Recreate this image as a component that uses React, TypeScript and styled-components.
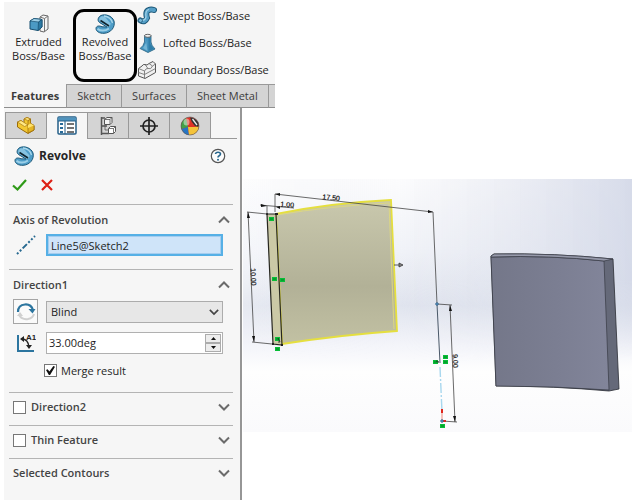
import React, { useState } from "react";
import styled, { createGlobalStyle } from "styled-components";

const GlobalStyle = createGlobalStyle`
  *, *::before, *::after { box-sizing: border-box; }
  body {
    margin: 0;
    background: #fff;
    color: #1e1e1e;
    font: 11px/16px "Open Sans", "Noto Sans", sans-serif;
  }
  button, input, select { font: inherit; color: inherit; margin: 0; }
  svg { display: block; flex: none; }
`;

const Page = styled.div`
  display: flex;
  flex-direction: column;
  align-items: stretch;
  min-height: 100vh;
  padding: 2px 0 0 4px;
`;

const CommandManager = styled.header`
  align-self: flex-start;
  width: 271px;
`;

const Ribbon = styled.div`
  display: flex;
  height: 82px;
  background: #f5f5f5;
`;

const BigCommand = styled.button<{ $marked?: boolean }>`
  display: flex;
  flex: none;
  flex-direction: column;
  align-items: center;
  width: ${(p) => (p.$marked ? 64 : 69)}px;
  height: 73px;
  margin-top: 7px;
  padding: ${(p) => (p.$marked ? 1 : 4)}px 0 0;
  border: ${(p) => (p.$marked ? "3px solid #000" : "0")};
  border-radius: 11px;
  background: none;
  line-height: 14px;
  white-space: nowrap;
`;

const BigIcon = styled.span`
  display: grid;
  place-items: center;
  height: 22px;
`;

const SmallCommands = styled.div`
  display: flex;
  flex-direction: column;
`;

const SmallCommand = styled.button`
  display: flex;
  align-items: center;
  gap: 6px;
  height: 27px;
  padding: 0;
  border: 0;
  background: none;
  white-space: nowrap;
`;

const Tabs = styled.nav`
  display: flex;
  height: 24px;
  background: #d4d4d4;
  border-bottom: 1px solid #8e8e8e;
`;

const Tab = styled.button<{ $active?: boolean }>`
  height: 24px;
  padding: 0 ${(p) => (p.$active ? 7 : 10)}px;
  border: 0;
  border-right: 1px solid #999;
  border-top: ${(p) => (p.$active ? "0" : "1px solid #999")};
  border-bottom: 1px solid #8e8e8e;
  background: ${(p) => (p.$active ? "#f5f5f5" : "#d4d4d4")};
  color: #3c3c3c;
  font-weight: ${(p) => (p.$active ? 700 : 400)};
  white-space: nowrap;
`;

const TabFiller = styled.span`
  flex: 1;
  border-top: 1px solid #999;
`;

const Workspace = styled.main`
  display: flex;
  flex: 1;
`;

const PropertyManager = styled.aside`
  flex: none;
  width: 238px;
  padding-top: 4px;
  border-right: 2px solid #969696;
  background: #f6f6f6;
`;

const PanelTabs = styled.div`
  display: flex;
  height: 27px;
  margin: 0 3px 0 1px;
  border-bottom: 1px solid #999;
`;

const PanelTab = styled.button<{ $active?: boolean }>`
  display: grid;
  place-items: center;
  width: 42px;
  height: 27px;
  margin-right: -1px;
  padding: 0;
  border: 1px solid #999;
  border-bottom-color: ${(p) => (p.$active ? "#f6f6f6" : "#999")};
  background: ${(p) => (p.$active ? "#f6f6f6" : "#d4d4d4")};
`;

const FeatureHeader = styled.div`
  display: flex;
  align-items: center;
  gap: 5px;
  height: 34px;
  padding: 0 14px 0 10px;
`;

const FeatureName = styled.h1`
  flex: 1;
  margin: 0;
  color: #262626;
  font-size: 12px;
  font-weight: 700;
`;

const IconButton = styled.button`
  display: grid;
  place-items: center;
  padding: 0;
  border: 0;
  background: none;
`;

const Actions = styled.div`
  display: flex;
  align-items: center;
  gap: 14px;
  height: 31px;
  padding: 0 0 8px 8px;
`;

const Group = styled.section`
  margin: 0 7px 0 5px;
  border-top: 1px solid #b4b4b4;
`;

const GroupHeader = styled.div<{ $tall?: boolean }>`
  display: flex;
  align-items: center;
  gap: 5px;
  height: ${(p) => (p.$tall ? 29 : 32)}px;
  padding: 0 3px ${(p) => (p.$tall ? 0 : 4)}px 4px;
`;

const GroupTitle = styled.h2`
  flex: 1;
  margin: 0;
  color: #444;
  font-size: 11px;
  font-weight: 600;
`;

const GroupLabel = styled.label`
  display: flex;
  align-items: center;
  gap: 5px;
`;

const GroupBody = styled.div`
  display: flex;
  flex-direction: column;
  gap: 8px;
  padding: 0 10px 13px 4px;
`;

const FieldRow = styled.div`
  display: grid;
  grid-template-columns: 25px 1fr;
  align-items: center;
  gap: 8px;
  min-height: 22px;
`;

const RowIcon = styled.label`
  display: grid;
  place-items: center;
`;

const ToggleButton = styled(IconButton)`
  width: 25px;
  height: 25px;
  border: 1px solid #a5a5a5;
  background: #fafafa;
`;

const SelectionField = styled.input`
  width: 100%;
  height: 22px;
  padding: 0 3px;
  border: 2px solid #56b0e6;
  border-radius: 0;
  background: #cfe4f9;
  box-shadow: inset 0 0 0 1px #a5cdef;
  outline: 0;
`;

const SelectWrap = styled.div`
  position: relative;
  > svg { position: absolute; right: 4px; top: 7px; pointer-events: none; }
`;

const Select = styled.select`
  display: block;
  width: 100%;
  height: 22px;
  padding: 0 4px;
  appearance: none;
  border: 1px solid #acacac;
  border-radius: 0;
  background: #e7e7e7;
`;

const SpinBox = styled.div`
  display: flex;
  height: 22px;
  padding: 1px;
  border: 1px solid #b0b0b0;
  background: #fff;
`;

const SpinInput = styled.input`
  flex: 1;
  min-width: 0;
  padding: 0 1px;
  border: 0;
  outline: 0;
  background: none;
`;

const SpinButtons = styled.div`
  display: flex;
  flex-direction: column;
  width: 16px;
`;

const SpinButton = styled(IconButton)`
  flex: 1;
  border: 1px solid #acacac;
  background: #ededed;
`;

const CheckLabel = styled.label`
  display: flex;
  align-items: center;
  gap: 4px;
  height: 17px;
  margin-left: 31px;
`;

const Checkbox = styled.input`
  display: grid;
  place-items: center;
  width: 13px;
  height: 13px;
  appearance: none;
  border: 1px solid #777;
  background: #fff;
  &:checked::before {
    content: "";
    width: 9px;
    height: 9px;
    background: #111;
    clip-path: polygon(0 45%, 18% 35%, 38% 62%, 82% 0, 100% 8%, 45% 100%, 32% 100%);
  }
`;

const Viewport = styled.section`
  flex: 1;
  min-width: 0;
  margin: 71px 0 0 1px;
`;

const Scene = styled.svg`
  width: 100%;
  height: auto;
`;

const RevolveIcon = ({ size = 20 }: { size?: number }) => (
  <svg width={size} height={size} viewBox="0 0 20 20">
    <path
      d="M6 1.500C10 -.2 17 1.500 19 7C20.500 13 16 19 9 19.300C4.500 19.500 1 17.500 1 14.500C1 12 4 11.300 7 12.800L12 13L4.500 8.500C2 6.500 3 3 6 1.500Z"
      fill="#4e9dc8" stroke="#1d5878"
    />
    <path d="M5 3.500Q7 1.500 10 3L15.500 9.500Q15.500 12.500 13 13L5.500 8Q3.300 6 5 3.500Z" fill="#86c2e0" />
    <path d="M9 2Q16 3 17.500 9" fill="none" stroke="#a9d7ec" strokeWidth="1.300" />
    <path d="M2.500 14.800Q8 18.500 14 14.500" fill="none" stroke="#9bcfe7" strokeWidth="2" />
    <path d="M5.500 6.500L14 12" stroke="#10242e" strokeWidth="1.600" />
  </svg>
);

const ExtrudeIcon = () => (
  <svg width="20" height="20" viewBox="0 0 20 20">
    <path d="M11 3L14 1L19 2V15L15 18L11 17Z" fill="#f4f4f4" stroke="#666" />
    <path d="M15.500 4.500V17.500M15.500 4.500L19 2M11 3L15.500 4.500" fill="none" stroke="#777" />
    <path d="M1 7L5 4.500L13 5.500V13L9 16.500L1 15Z" fill="#4b9ac4" stroke="#174f70" />
    <path d="M1 7L5 4.500L13 5.500L9.500 8Z" fill="#9fd0e7" stroke="#174f70" strokeWidth=".7" />
    <path d="M9.500 8L13 5.500V13L9 16.500Z" fill="#2c7aa4" stroke="#174f70" strokeWidth=".7" />
  </svg>
);

const SweptIcon = () => (
  <svg width="20" height="19" viewBox="0 0 20 19">
    <path d="M3.500 14.500Q8 17 10 12Q8 5 12 4Q14 3 17 4" fill="none" stroke="#1d5878" strokeWidth="6" strokeLinecap="round" />
    <path d="M3.500 14.500Q8 17 10 12Q8 5 12 4Q14 3 17 4" fill="none" stroke="#559fc7" strokeWidth="4" strokeLinecap="round" />
    <path d="M4 14Q8 15 9 11Q8 4 12 3.500" fill="none" stroke="#a5d4e9" strokeWidth="1.200" />
    <circle cx="3.500" cy="14.500" r="2" fill="#78b8d8" stroke="#1d5878" strokeWidth=".8" />
  </svg>
);

const LoftedIcon = () => (
  <svg width="20" height="20" viewBox="0 0 20 20">
    <path d="M7.500 2.500V9Q6.500 13 3 15.500L11 19.500L18 16Q14 12 14 9V2.500Z" fill="#4594bf" stroke="#245f80" strokeWidth=".8" />
    <path d="M8.500 4L9 10L6 15L10.500 18Z" fill="#73b5d5" />
    <path d="M11.500 4V18L17 16Q13 12 13 9V4Z" fill="#2e7da8" />
    <ellipse cx="10.800" cy="2.800" rx="3.300" ry="1.500" fill="#f1f1f1" stroke="#555" strokeWidth=".9" />
  </svg>
);

const BoundaryIcon = () => (
  <svg width="20" height="20" viewBox="0 0 20 20">
    <path d="M1.500 8.500L5 6Q6 4 8 4.500Q10 6 12 3.500L16 1.500L18.500 4V12.500L8 18.500L1.500 16Z" fill="#f0f0f0" stroke="#555" />
    <path d="M1.500 8.500L7.500 11Q9 8 11 8.500Q14 10 15.500 6L18.500 4M7.500 11V18.500M1.500 12.500L7.500 14.500L18.500 8.500M8 4.500L11 8.500M12 3.500L15.500 6" fill="none" stroke="#777" strokeWidth=".9" />
  </svg>
);

const PartIcon = () => (
  <svg width="20" height="19" viewBox="0 0 20 19">
    <path d="M1.500 6V11L12 17.500L18 14V9.500L14.500 7.500V3L11 1.500L8 3V7L5 4.500Z" fill="#f3c832" stroke="#9a6b09" />
    <path d="M1.500 6L5 4.500L12 9L8.500 10.500ZM8 3L11 1.500L14.500 3L12 4.500Z" fill="#ffe884" stroke="#aa7b16" strokeWidth=".7" />
    <path d="M12 5V17L18 14V9.500L14.500 7.500V3Z" fill="#e5b526" stroke="#9a6b09" strokeWidth=".7" />
    <path d="M12 12L18 9.500L14.500 7.500L12 9Z" fill="#ffe26b" />
  </svg>
);

const PropertiesIcon = () => (
  <svg width="20" height="19" viewBox="0 0 20 19">
    <rect x="1" y="1" width="18" height="17" rx="1" fill="#fff" stroke="#245f88" strokeWidth="1.500" />
    <path d="M1 1.500H19V5H1Z" fill="#4f93bd" />
    <path d="M1 5H19M8 5V18" stroke="#245f88" />
    <path d="M3 8H6M3 12H6M3 16H6" stroke="#286a98" strokeWidth="2" />
    <path d="M10 8H17M10 12H17M10 16H17" stroke="#454545" strokeWidth="1.300" />
  </svg>
);

const ConfigIcon = () => (
  <svg width="18" height="20" viewBox="0 0 18 20">
    <path d="M2.500 1V19M2.500 2H6M2.500 10H8M2.500 17.500H10" fill="none" stroke="#555" strokeWidth="1.500" />
    <path d="M5.500 3.500L8 1.500H13V6.500L11 8.500H5.500Z" fill="#f4f4f4" stroke="#555" />
    <path d="M5.500 3.500H11V8.500M11 3.500L13 1.500" fill="none" stroke="#555" strokeWidth=".8" />
    <path d="M9.500 12.500L11.500 10.500H16.500V15.500L14.500 17.500H9.500Z" fill="#fff" stroke="#555" />
    <path d="M9.500 12.500H14.500V17.500M14.500 12.500L16.500 10.500M6 9V14H9" fill="none" stroke="#555" strokeWidth=".8" />
  </svg>
);

const TargetIcon = () => (
  <svg width="20" height="20" viewBox="0 0 20 20" fill="none" stroke="#222" strokeWidth="1.700">
    <circle cx="10" cy="10" r="6" />
    <path d="M10 1V19M1 10H19" />
  </svg>
);

const AppearanceIcon = () => (
  <svg width="20" height="20" viewBox="0 0 20 20">
    <circle cx="10" cy="10" r="9" fill="#df3327" />
    <path d="M8 11L6 2A9 9 0 0 0 1.500 13Z" fill="#43a047" />
    <path d="M8 11L1.500 13A9 9 0 0 0 9 19Z" fill="#2675c3" />
    <path d="M8 11L9 19A9 9 0 0 0 19 10L15 11Z" fill="#f4c33a" />
    <path d="M10 1.500Q15 1.500 18 6Q19 9 18.500 11L15 10Q11 6 10 1.500Z" fill="#333" />
    <path d="M12.500 3L17 9" stroke="#eee" strokeWidth="1.300" />
    <ellipse cx="6.500" cy="6" rx="3" ry="3.500" fill="#fff" opacity=".45" />
    <circle cx="10" cy="10" r="9" fill="none" stroke="#555" strokeWidth=".6" />
  </svg>
);

const HelpIcon = () => (
  <svg width="16" height="16" viewBox="0 0 16 16">
    <circle cx="8" cy="8" r="6.700" fill="#fcfcfc" stroke="#555" strokeWidth="1.200" />
    <path d="M5.500 6Q5.700 4.200 8 4.200Q10.500 4.200 10.500 6Q10.500 7 9.200 7.800Q8 8.500 8 9.500" fill="none" stroke="#28678e" strokeWidth="1.600" />
    <circle cx="8" cy="11.800" r="1" fill="#28678e" />
  </svg>
);

const Chevron = ({ up, bold }: { up?: boolean; bold?: boolean }) => (
  <svg width={bold ? 10 : 12} height="8" viewBox="0 0 12 8">
    <path d={up ? "M1 6.500L6 1.500L11 6.500" : "M1 1.500L6 6.500L11 1.500"} fill="none" stroke={bold ? "#444" : "#6b6b6b"} strokeWidth="2" />
  </svg>
);

const SpinArrow = ({ up }: { up?: boolean }) => (
  <svg width="5" height="3" viewBox="0 0 5 3">
    <path d={up ? "M0 3L2.500 0L5 3Z" : "M0 0L2.500 3L5 0Z"} fill="#111" />
  </svg>
);

const relationMarks = [
  [269, 217], [272, 277], [280, 278], [275, 337], [275, 347],
  [433, 360], [443, 355], [443, 360], [440, 424],
];

const CadScene = () => (
  <Scene viewBox="243 179 389 253" role="img" aria-label="Revolve preview and resulting solid">
    <defs>
      <linearGradient id="sky" x1="0" y1="0" x2="0" y2="1">
        <stop offset="0" stopColor="#fcfcfd" />
        <stop offset=".28" stopColor="#f1f3f8" />
        <stop offset=".5" stopColor="#e0e4ee" />
        <stop offset=".66" stopColor="#f4f5fa" />
        <stop offset=".76" stopColor="#fefefe" />
        <stop offset="1" stopColor="#fafafc" />
      </linearGradient>
      <linearGradient id="skySide" x1="0" y1="0" x2="1" y2="0">
        <stop offset="0" stopColor="#fff" stopOpacity=".3" />
        <stop offset=".4" stopColor="#dfe2ed" stopOpacity="0" />
        <stop offset="1" stopColor="#d4d9e8" stopOpacity=".95" />
      </linearGradient>
      <linearGradient id="skyFade" x1="0" y1="0" x2="0" y2="1">
        <stop offset=".4" stopColor="#fff" />
        <stop offset=".72" stopColor="#000" />
      </linearGradient>
      <mask id="skyMask"><rect x="243" y="179" width="389" height="253" fill="url(#skyFade)" /></mask>
      <linearGradient id="preview" x1="0" y1="0" x2="0" y2="1">
        <stop offset="0" stopColor="#c9c8ad" />
        <stop offset=".6" stopColor="#b2b197" />
        <stop offset="1" stopColor="#c2c1a3" />
      </linearGradient>
      <linearGradient id="solid" x1="0" y1="0" x2="1" y2="0">
        <stop offset="0" stopColor="#747789" />
        <stop offset=".55" stopColor="#7b7e92" />
        <stop offset="1" stopColor="#82859a" />
      </linearGradient>
    </defs>
    <rect x="243" y="179" width="389" height="253" fill="url(#sky)" />
    <rect x="243" y="179" width="389" height="253" fill="url(#skySide)" mask="url(#skyMask)" />

    <path d="M276 214Q330 203 391 200L397 331Q340 335 282 344Z" fill="url(#preview)" stroke="#e5df3f" strokeWidth="1.800" />
    <path d="M277 215Q330 206 389 203L394 329" fill="none" stroke="#dcd783" strokeWidth="1" />
    <path d="M267 214H276L282 345L273 344Z" fill="#cbc9a6" stroke="#272720" strokeWidth="1.200" />
    <g fill="#222"><rect x="266" y="213" width="2" height="2" /><rect x="275" y="213" width="3" height="2" /><rect x="272" y="343" width="2" height="2" /><rect x="281" y="344" width="2" height="2" /></g>
    <g fill="none" stroke="#444" strokeWidth=".8">
      <path d="M275 212V194L433 212L437 304" />
      <path d="M260 205L294 208M267 214V206" />
      <path d="M267 214L247 212M248 212L254 342M272 344L252 342" />
      <path d="M437 304L452 305M450 305L455 422M442 421L457 422" />
    </g>
    <g fill="#111">
      <path d="M275 194L280 193V196ZM433 212L428 210V213ZM276 207L280 206V209ZM267 206L261 204V207Z" />
      <path d="M248 212L247 218H250ZM254 342L252 336H255ZM450 305L449 311H452ZM455 422L453 416H456Z" />
    </g>
    <path d="M437 304L440 363" stroke="#4a5868" strokeWidth="1" />
    <path d="M440 367L442 412" stroke="#a8d7ee" strokeWidth="1.400" strokeDasharray="10 2 2 2" />
    <path d="M442 412L442 421" stroke="#f2aaa0" strokeWidth="1.400" />
    <path d="M441 409H443V413H441ZM443 420H446V422H443Z" fill="#e0261d" />
    <g fill="#5b9bd0" stroke="#315d82" strokeWidth=".8"><circle cx="437" cy="304" r="1.300" /><circle cx="442" cy="421" r="1.300" /></g>
    <g fill="#07bd36">
      {relationMarks.map(([x, y]) => (
        <g key={`${x}-${y}`}><rect x={x} y={y} width="5" height="4" /><path d={`M${x + 1} ${y + 2}h3`} stroke="#056b21" strokeWidth=".7" /></g>
      ))}
    </g>
    <path d="M278 338L280 342H278M436 361Q440 361 438 363" stroke="#222" strokeWidth=".8" fill="none" />
    <path d="M394 265H399M399 263L403 265L399 267Z" fill="#888" stroke="#333" strokeWidth=".8" />
    <g fill="#111" stroke="#111" strokeWidth=".2" fontFamily="Liberation Sans, sans-serif" fontSize="7" textAnchor="middle">
      <text transform="translate(331 200) rotate(5)">17.50</text>
      <text transform="translate(287 207) rotate(4)">1.00</text>
      <text transform="translate(251 277) rotate(88)">10.00</text>
      <text transform="translate(453 361) rotate(88)">9.00</text>
    </g>

    <path d="M491 256L494 254Q555 253 613 259L619 389L609 391Q554 386 496 386Z" fill="#656979" stroke="#292c33" strokeWidth=".8" />
    <path d="M491 257Q550 255 604 261L609 390Q554 386 496 386Z" fill="url(#solid)" stroke="#363944" strokeWidth=".7" />
    <path d="M491 256L494 254Q555 253 613 259L604 261Q550 255 491 257Z" fill="#9699aa" stroke="#363944" strokeWidth=".7" />
  </Scene>
);

export default function App() {
  const [axis, setAxis] = useState("Line5@Sketch2");
  const [angle, setAngle] = useState(33);
  const [merge, setMerge] = useState(true);
  return (
    <>
      <GlobalStyle />
      <Page>
        <CommandManager>
          <Ribbon>
            <BigCommand><BigIcon><ExtrudeIcon /></BigIcon><span>Extruded<br />Boss/Base</span></BigCommand>
            <BigCommand $marked><BigIcon><RevolveIcon /></BigIcon><span>Revolved<br />Boss/Base</span></BigCommand>
            <SmallCommands>
              <SmallCommand><SweptIcon />Swept Boss/Base</SmallCommand>
              <SmallCommand><LoftedIcon />Lofted Boss/Base</SmallCommand>
              <SmallCommand><BoundaryIcon />Boundary Boss/Base</SmallCommand>
            </SmallCommands>
          </Ribbon>
          <Tabs>
            <Tab $active>Features</Tab>
            <Tab>Sketch</Tab>
            <Tab>Surfaces</Tab>
            <Tab>Sheet Metal</Tab>
            <TabFiller />
          </Tabs>
        </CommandManager>
        <Workspace>
          <PropertyManager>
            <PanelTabs>
              <PanelTab aria-label="Feature tree"><PartIcon /></PanelTab>
              <PanelTab $active aria-label="Properties"><PropertiesIcon /></PanelTab>
              <PanelTab aria-label="Configurations"><ConfigIcon /></PanelTab>
              <PanelTab aria-label="Dimensions"><TargetIcon /></PanelTab>
              <PanelTab aria-label="Appearances"><AppearanceIcon /></PanelTab>
            </PanelTabs>
            <FeatureHeader>
              <RevolveIcon />
              <FeatureName>Revolve</FeatureName>
              <IconButton aria-label="Help"><HelpIcon /></IconButton>
            </FeatureHeader>
            <Actions>
              <IconButton aria-label="OK">
                <svg width="15" height="14" viewBox="0 0 15 14"><path d="M1 7.500L5.500 11.500L14 2" fill="none" stroke="#2f9a18" strokeWidth="2.200" /></svg>
              </IconButton>
              <IconButton aria-label="Cancel">
                <svg width="12" height="12" viewBox="0 0 12 12"><path d="M1 1L11 11M11 1L1 11" fill="none" stroke="#dd2015" strokeWidth="2.200" /></svg>
              </IconButton>
            </Actions>
            <Group>
              <GroupHeader $tall>
                <GroupTitle>Axis of Revolution</GroupTitle>
                <IconButton aria-label="Collapse Axis of Revolution"><Chevron up /></IconButton>
              </GroupHeader>
              <GroupBody>
                <FieldRow>
                  <RowIcon htmlFor="axis" aria-label="Axis">
                    <svg width="20" height="20" viewBox="0 0 20 20"><path d="M1 19L19 1" stroke="#276990" strokeWidth="2" strokeDasharray="2 2 2 2 6 2" /></svg>
                  </RowIcon>
                  <SelectionField id="axis" value={axis} onChange={(e) => setAxis(e.target.value)} />
                </FieldRow>
              </GroupBody>
            </Group>
            <Group>
              <GroupHeader $tall>
                <GroupTitle>Direction1</GroupTitle>
                <IconButton aria-label="Collapse Direction1"><Chevron up /></IconButton>
              </GroupHeader>
              <GroupBody>
                <FieldRow>
                  <ToggleButton aria-label="Reverse direction">
                    <svg width="20" height="20" viewBox="0 0 20 20">
                      <path d="M2 10Q2 3 9 2.500Q15 2 17 8" fill="none" stroke="#2c759f" strokeWidth="2.200" />
                      <path d="M12.500 7H19.500L16.500 11.500Z" fill="#2c759f" />
                      <path d="M3 13Q6 18 12 17Q17 16 18 12" fill="none" stroke="#d0d0d0" strokeWidth="2" />
                      <path d="M1 14L4 10L7 14Z" fill="#d0d0d0" />
                    </svg>
                  </ToggleButton>
                  <SelectWrap>
                    <Select aria-label="End condition"><option>Blind</option><option>Up To Vertex</option><option>Mid Plane</option></Select>
                    <Chevron bold />
                  </SelectWrap>
                </FieldRow>
                <FieldRow>
                  <RowIcon htmlFor="angle" aria-label="Angle">
                    <svg width="20" height="20" viewBox="0 0 20 20">
                      <path d="M2 2V18H18" fill="none" stroke="#2c759f" strokeWidth="2" />
                      <path d="M6 6Q12 6 13 14" fill="none" stroke="#222" strokeWidth="1.400" />
                      <path d="M4 6L8 3V9ZM10 12H16L13 16Z" fill="#222" />
                      <text x="10" y="7" fontSize="8" fontWeight="700" fontFamily="Liberation Sans, sans-serif" fill="#222">A1</text>
                    </svg>
                  </RowIcon>
                  <SpinBox>
                    <SpinInput id="angle" value={`${angle.toFixed(2)}deg`} onChange={(e) => setAngle(parseFloat(e.target.value) || 0)} />
                    <SpinButtons>
                      <SpinButton aria-label="Increase angle" onClick={() => setAngle(angle + 1)}><SpinArrow up /></SpinButton>
                      <SpinButton aria-label="Decrease angle" onClick={() => setAngle(angle - 1)}><SpinArrow /></SpinButton>
                    </SpinButtons>
                  </SpinBox>
                </FieldRow>
                <CheckLabel>
                  <Checkbox type="checkbox" checked={merge} onChange={(e) => setMerge(e.target.checked)} />
                  Merge result
                </CheckLabel>
              </GroupBody>
            </Group>
            {["Direction2", "Thin Feature"].map((name) => (
              <Group key={name}>
                <GroupHeader>
                  <GroupTitle><GroupLabel><Checkbox type="checkbox" />{name}</GroupLabel></GroupTitle>
                  <IconButton aria-label={`Expand ${name}`}><Chevron /></IconButton>
                </GroupHeader>
              </Group>
            ))}
            <Group>
              <GroupHeader>
                <GroupTitle>Selected Contours</GroupTitle>
                <IconButton aria-label="Expand Selected Contours"><Chevron /></IconButton>
              </GroupHeader>
            </Group>
          </PropertyManager>
          <Viewport><CadScene /></Viewport>
        </Workspace>
      </Page>
    </>
  );
}
